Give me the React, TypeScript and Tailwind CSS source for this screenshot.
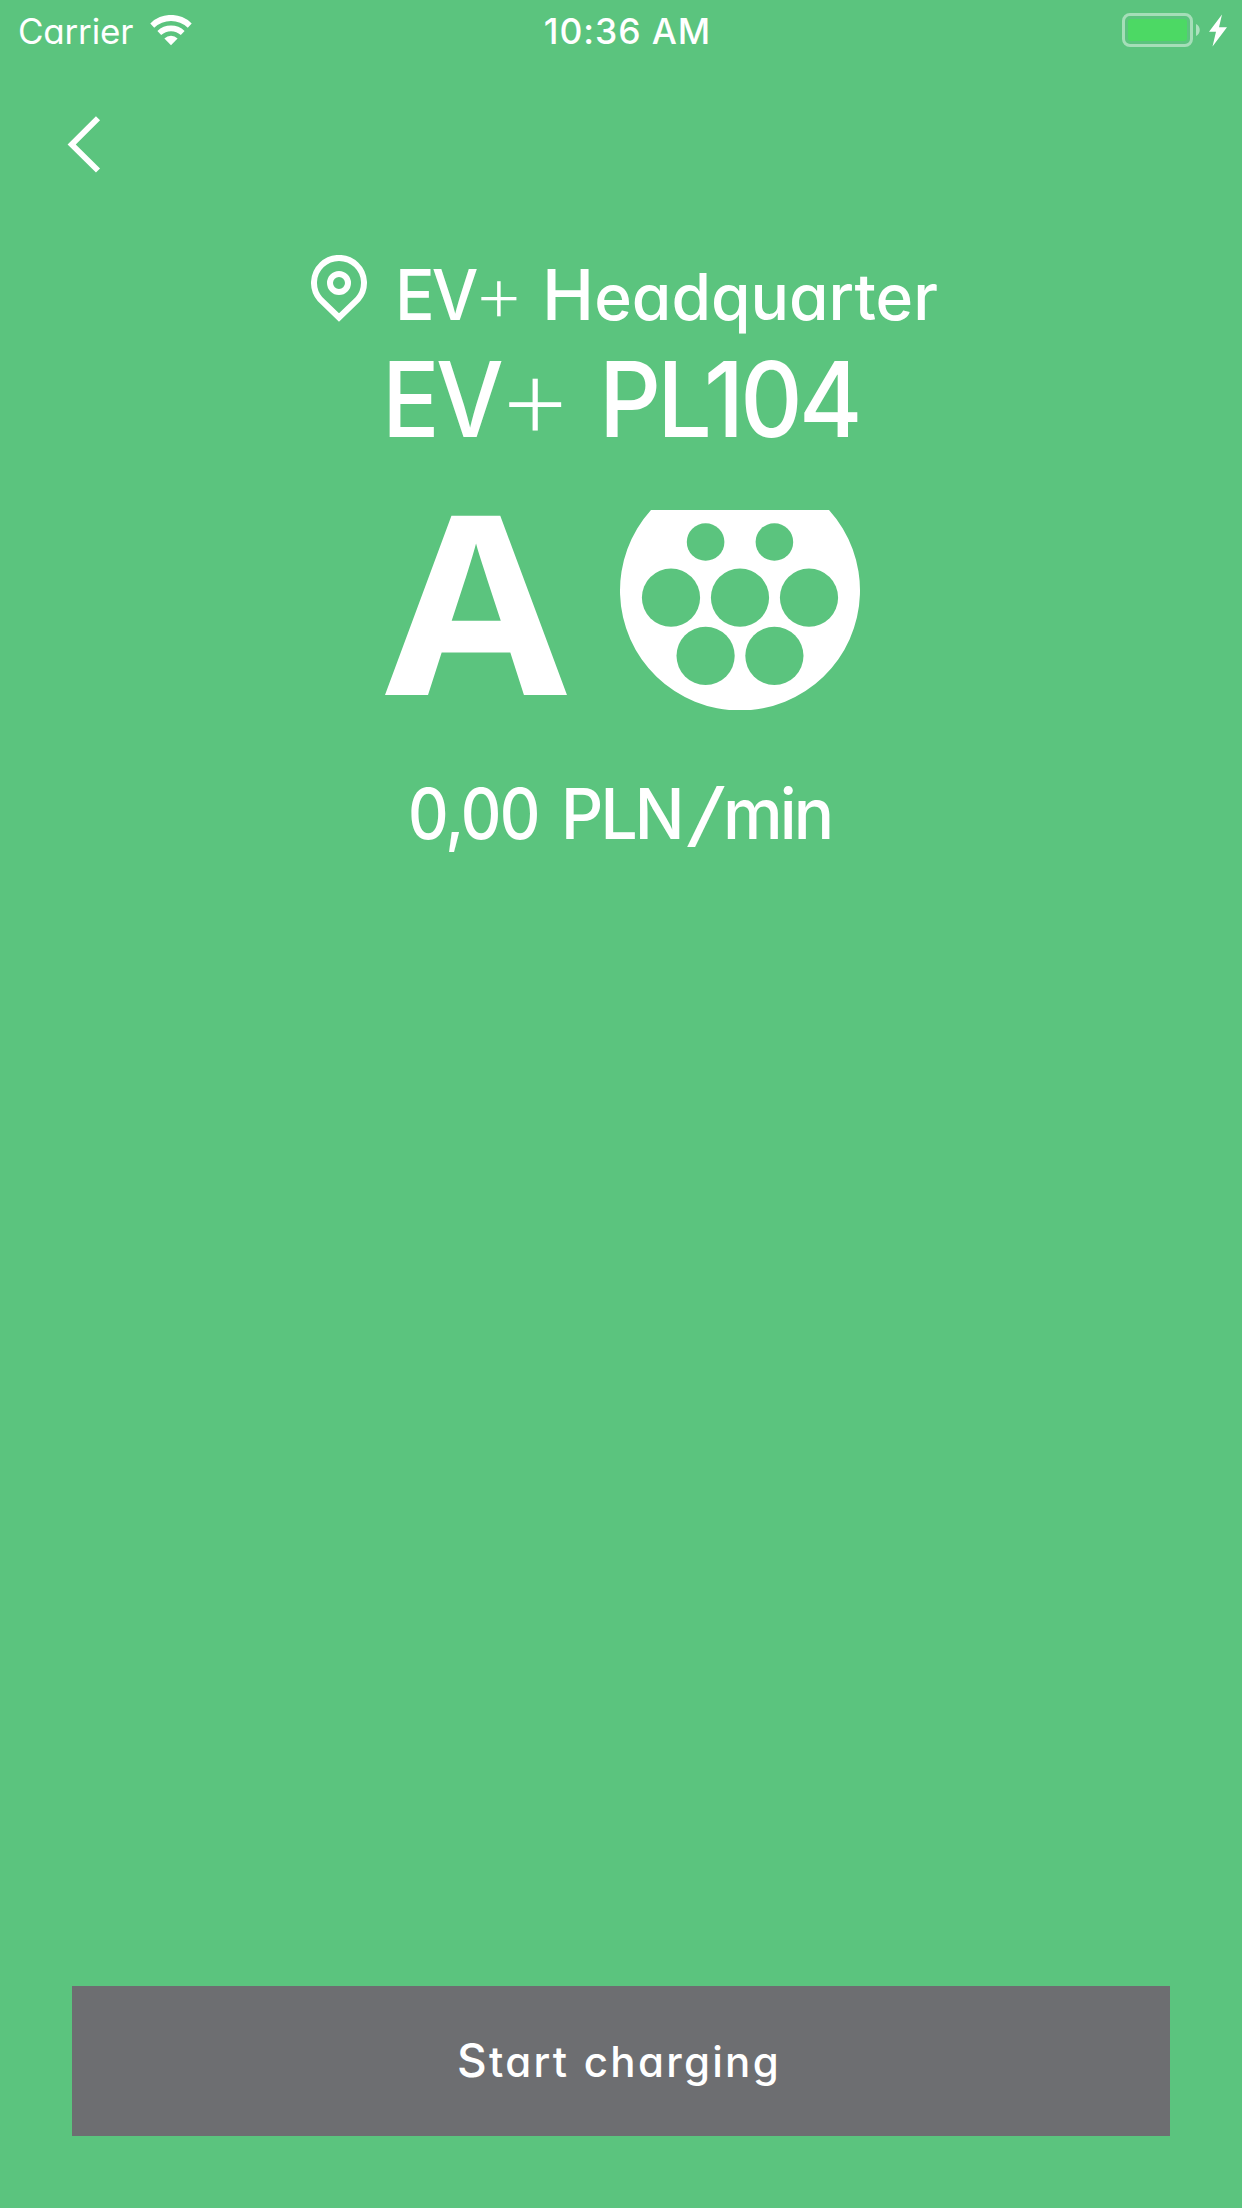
import React from "react";

const pins = [
  { cx: 95.6, cy: 42, r: 18.8 },
  { cx: 164.4, cy: 42, r: 18.8 },
  { cx: 61, cy: 97.7, r: 29.1 },
  { cx: 130, cy: 97.7, r: 29.1 },
  { cx: 199, cy: 97.7, r: 29.1 },
  { cx: 95.6, cy: 155.8, r: 29.1 },
  { cx: 164.4, cy: 155.8, r: 29.1 },
];

const StatusBar = () => {
  return (
    <div className="grid grid-cols-3 items-center h-[62px] w-full">
      <div className="flex items-center pl-[18px]">
        <span className="w-[115px] text-[35px] leading-[62px] tracking-[-0.2px]">Carrier</span>
        <svg className="ml-[16px] w-[44px] h-[32px]" viewBox="149 15 44 32" fill="none">
          <path d="M150.3 23.4 A29.5 29.5 0 0 1 191.7 23.4 L187.8 27.7 A24.6 24.6 0 0 0 154.2 27.7 Z" fill="white" />
          <path d="M157.4 31 A19.3 19.3 0 0 1 184.6 31 L180.8 35 A14.4 14.4 0 0 0 161.2 35 Z" fill="white" />
          <path d="M164.4 38.6 A9.3 9.3 0 0 1 177.6 38.6 L171 45.2 Z" fill="white" />
        </svg>
      </div>
      <div className="h-[62px] text-center text-[35.5px] leading-[62px] font-medium tracking-[0.9px] pl-[13px] pt-px">10:36 AM</div>
      <div className="flex justify-end pr-[14px]">
        <svg className="w-[108px] h-[40px]" viewBox="1120 11 108 40" fill="none">
          <rect x="1123.5" y="14.5" width="68" height="31" rx="6.5" stroke="white" strokeOpacity="0.45" strokeWidth="3" />
          <rect x="1128" y="19" width="59" height="22" rx="3" fill="#4cd964" />
          <path d="M1196 24 C1201 26 1201 34 1196 36 Z" fill="white" fillOpacity="0.5" />
          <path d="M1222 14.5 L1209 31.8 H1216 L1212.5 46.5 L1227 27.3 H1219 Z" fill="white" />
        </svg>
      </div>
    </div>
  );
};

const App = () => {
  return (
    <div className="flex flex-col w-[1242px] h-[2208px] overflow-hidden bg-[#5bc47e] text-white font-['Inter',sans-serif] whitespace-nowrap [font-feature-settings:'cv11']">
      <StatusBar />

      <button className="w-[34px] h-[58px] mt-[54px] ml-[67px]" aria-label="Back">
        <svg className="w-[34px] h-[58px]" viewBox="67 116 34 58" fill="none">
          <path d="M98 118.2 L71.7 144.5 L98 170.5" stroke="white" strokeWidth="5.8" />
        </svg>
      </button>

      <div className="flex h-[90px] mt-[76px] pl-[311px]">
        <svg className="w-[57px] h-[67px] mt-[5px]" viewBox="311 254.5 57 67" fill="none">
          <path d="M339 317 L320.3 299 A25 25 0 1 1 357.7 299 Z" stroke="white" strokeWidth="6" />
          <circle cx="339" cy="282.6" r="9" stroke="white" strokeWidth="6" />
        </svg>
        <h2 className="flex text-[70px] leading-[90px] font-medium ml-[27px]">
          <span className="tracking-[-3px] origin-left scale-x-[0.94]">EV</span>
          <span className="font-extralight text-[81px] ml-[-8px] mt-[-2px]">+</span>
          <span className="inline-block ml-[17px] text-[64px] first-letter:text-[70px]">Headquarter</span>
        </h2>
      </div>

      <h1 className="flex h-[120px] mt-[-1px] pl-[382px] text-[104px] leading-[120px] font-medium">
        <span className="tracking-[-4px] origin-left scale-x-[0.92]">EV</span>
        <span className="font-extralight text-[120px] ml-[-14px] mt-[-3px]">+</span>
        <span className="ml-[25px] tracking-[-4px] origin-left scale-x-[0.93]">PL104</span>
      </h1>

      <div className="flex items-start mt-[51px] pl-[385px] h-[200px]">
        <span className="w-[186px] mt-[-7px] font-['Open_Sans',sans-serif] text-[250px] leading-[190px] font-bold origin-left scale-x-[1.055]">A</span>
        <svg className="w-[240px] h-[200px] ml-[49px]" viewBox="10 10 240 200" fill="none">
          <path d="M41 10 H219 A120 120 0 1 1 41 10 Z" fill="white" />
          {pins.map((pin, i) => (
            <circle key={i} cx={pin.cx} cy={pin.cy} r={pin.r} fill="#5bc47e" />
          ))}
        </svg>
      </div>

      <div className="flex h-[90px] mt-[59px] pl-[408px] text-[70px] leading-[90px] font-medium">
        <span className="tracking-[-2px] origin-left scale-x-[0.9]">0,00</span>
        <span className="ml-[8px] tracking-[-3px] origin-left scale-x-[0.94]">PLN</span>
        <span className="flex justify-center w-[34px] font-light scale-x-[1.8]">/</span>
        <span className="tracking-[-3px] origin-left scale-x-[0.96]">min</span>
      </div>

      <button className="w-[1098px] h-[150px] mt-auto mb-[72px] mx-auto pb-[2px] pr-[4px] bg-[#6d6e71] flex justify-center items-center text-[42px] font-medium">
        <span className="inline-block first-letter:text-[46px] tracking-[2.3px] [word-spacing:1px]">Start charging</span>
      </button>
    </div>
  );
};

export default App;
